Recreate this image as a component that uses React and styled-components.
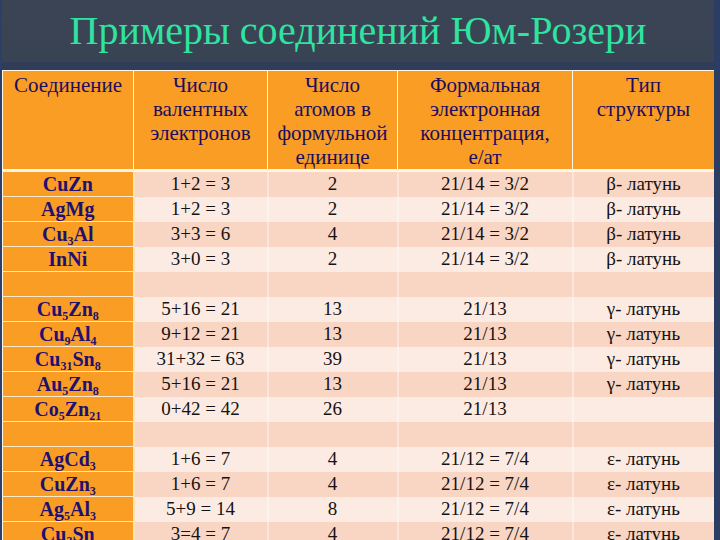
import React from "react";
import styled, { createGlobalStyle } from "styled-components";

const SERIF = `"Liberation Serif", Tinos, serif`;

const Global = createGlobalStyle`
  html, body { margin: 0; padding: 0; }
  body {
    width: 720px;
    height: 540px;
    overflow: hidden;
    background: #333e4e;
    font-family: ${SERIF};
  }
`;

const Slide = styled.div`
  width: 720px;
  height: 540px;
  overflow: hidden;
  box-sizing: border-box;
  background: linear-gradient(180deg, #3a4454 0%, #344052 40%, #2f3b4d 100%);
  border-left: 2px solid #2c3f66;
  border-right: 6px solid #2b3d62;
  display: flex;
  flex-direction: column;
`;

const Title = styled.h1`
  margin: 0;
  flex: 0 0 62px;
  box-sizing: border-box;
  padding-top: 8px;
  text-align: center;
  font-family: ${SERIF};
  font-weight: 400;
  font-size: 40px;
  line-height: 46px;
  color: #2fe3a0;
`;

const Band = styled.div`
  flex: 0 0 8px;
  background: #2f3d58;
`;

const Table = styled.table`
  flex: 0 0 auto;
  width: 712px;
  border-collapse: collapse;
  table-layout: fixed;
  font-family: ${SERIF};
  font-size: 19px;
`;

const HeadCell = styled.th`
  background: #f99d25;
  color: #1c0d5e;
  font-family: ${SERIF};
  font-weight: 400;
  font-size: 21px;
  vertical-align: top;
  text-align: center;
  box-sizing: border-box;
  padding: 2px 2px 0;
  line-height: 24px;
  border: 1px solid #fff6e8;
  border-bottom: 3px solid #fff6e8;
`;

const NameCell = styled.td`
  background: #f99d25;
  color: #1f1070;
  font-family: ${SERIF};
  font-weight: 700;
  font-size: 20px;
  text-align: center;
  height: 24px;
  padding: 0;
  line-height: 24px;
  border-left: 1px solid #fff6e8;
  border-right: 2px solid #fbe3b6;
  border-bottom: 1px solid #fde9cc;
  white-space: nowrap;
`;

const DataCell = styled.td`
  background: ${(p) => (p.$dark ? "#f9d5c3" : "#fcebe3")};
  color: #161212;
  font-family: ${SERIF};
  font-weight: 400;
  text-align: center;
  height: 24px;
  padding: 0;
  line-height: 24px;
  border-right: 2px solid ${(p) => (p.$dark ? "#fbe6dc" : "#fdf3ee")};
  border-bottom: 1px solid ${(p) => (p.$dark ? "#f9d5c3" : "#fcebe3")};
  white-space: nowrap;
`;

const Sub = styled.sub`
  font-size: 12px;
  line-height: 0;
  vertical-align: -4px;
`;

const F = ({ parts }) =>
  parts.map((p, i) =>
    /^\d+$/.test(p) ? <Sub key={i}>{p}</Sub> : <React.Fragment key={i}>{p}</React.Fragment>
  );

const rows = [
  [["Cu", "Zn"], "1+2 = 3", "2", "21/14 = 3/2", "β- латунь"],
  [["Ag", "Mg"], "1+2 = 3", "2", "21/14 = 3/2", "β- латунь"],
  [["Cu", "3", "Al"], "3+3 = 6", "4", "21/14 = 3/2", "β- латунь"],
  [["In", "Ni"], "3+0 = 3", "2", "21/14 = 3/2", "β- латунь"],
  [[], "", "", "", ""],
  [["Cu", "5", "Zn", "8"], "5+16 = 21", "13", "21/13", "γ- латунь"],
  [["Cu", "9", "Al", "4"], "9+12 = 21", "13", "21/13", "γ- латунь"],
  [["Cu", "31", "Sn", "8"], "31+32 = 63", "39", "21/13", "γ- латунь"],
  [["Au", "5", "Zn", "8"], "5+16 = 21", "13", "21/13", "γ- латунь"],
  [["Co", "5", "Zn", "21"], "0+42 = 42", "26", "21/13", ""],
  [[], "", "", "", ""],
  [["Ag", "Cd", "3"], "1+6 = 7", "4", "21/12 = 7/4", "ε- латунь"],
  [["Cu", "Zn", "3"], "1+6 = 7", "4", "21/12 = 7/4", "ε- латунь"],
  [["Ag", "5", "Al", "3"], "5+9 = 14", "8", "21/12 = 7/4", "ε- латунь"],
  [["Cu", "3", "Sn"], "3=4 = 7", "4", "21/12 = 7/4", "ε- латунь"],
];

export default function App() {
  return (
    <>
      <Global />
      <Slide>
        <Title>Примеры соединений Юм-Розери</Title>
        <Band />
        <Table>
          <colgroup>
            <col style={{ width: 131 }} />
            <col style={{ width: 134 }} />
            <col style={{ width: 130 }} />
            <col style={{ width: 175 }} />
            <col style={{ width: 142 }} />
          </colgroup>
          <thead>
            <tr>
              <HeadCell>Соединение</HeadCell>
              <HeadCell>
                Число
                <br />
                валентных
                <br />
                электронов
              </HeadCell>
              <HeadCell>
                Число
                <br />
                атомов в
                <br />
                формульной
                <br />
                единице
              </HeadCell>
              <HeadCell>
                Формальная
                <br />
                электронная
                <br />
                концентрация,
                <br />
                е/ат
              </HeadCell>
              <HeadCell>
                Тип
                <br />
                структуры
              </HeadCell>
            </tr>
          </thead>
          <tbody>
            {rows.map((r, i) => {
              const dark = i % 2 === 0;
              return (
                <tr key={i}>
                  <NameCell>
                    <F parts={r[0]} />
                  </NameCell>
                  <DataCell $dark={dark}>{r[1]}</DataCell>
                  <DataCell $dark={dark}>{r[2]}</DataCell>
                  <DataCell $dark={dark}>{r[3]}</DataCell>
                  <DataCell $dark={dark}>{r[4]}</DataCell>
                </tr>
              );
            })}
          </tbody>
        </Table>
      </Slide>
    </>
  );
}
